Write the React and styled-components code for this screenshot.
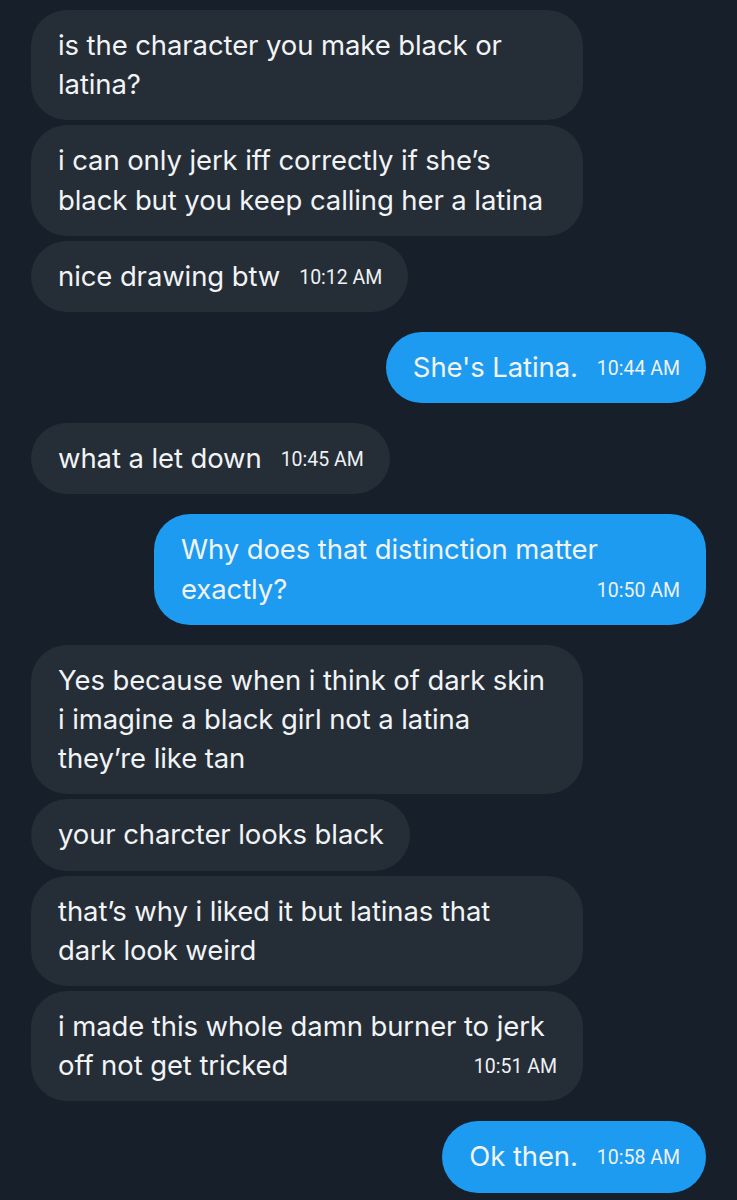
import React from "react";
import styled, { createGlobalStyle } from "styled-components";

const GlobalStyle = createGlobalStyle`
  html, body {
    margin: 0;
    padding: 0;
    background: #17202a;
  }
`;

// line breaks follow the screenshot
const groups = [
  {
    mine: false,
    messages: [
      { text: "is the character you make black or\nlatina?" },
      { text: "i can only jerk iff correctly if she’s\nblack but you keep calling her a latina" },
      { text: "nice drawing btw", time: "10:12 AM" },
    ],
  },
  { mine: true, messages: [{ text: "She's Latina.", time: "10:44 AM" }] },
  { mine: false, messages: [{ text: "what a let down", time: "10:45 AM" }] },
  {
    mine: true,
    messages: [{ text: "Why does that distinction matter\nexactly?", time: "10:50 AM" }],
  },
  {
    mine: false,
    messages: [
      { text: "Yes because when i think of dark skin\ni imagine a black girl not a latina\nthey’re like tan" },
      { text: "your charcter looks black" },
      { text: "that’s why i liked it but latinas that\ndark look weird" },
      { text: "i made this whole damn burner to jerk\noff not get tricked", time: "10:51 AM" },
    ],
  },
  { mine: true, messages: [{ text: "Ok then.", time: "10:58 AM" }] },
];

export default function App() {
  return (
    <Page>
      <GlobalStyle />
      {groups.map((group, gi) => (
        <Group key={gi} $mine={group.mine}>
          {group.messages.map((msg, mi) => (
            <Bubble key={mi} $mine={group.mine} $full={msg.text.includes("\n")}>
              {msg.text}
              {msg.time && <Time>{msg.time}</Time>}
            </Bubble>
          ))}
        </Group>
      ))}
    </Page>
  );
}

const Page = styled.div`
  min-height: 1200px;
  box-sizing: border-box;
  background: #17202a;
  padding: 10px 31px 8px 31px;
  display: flex;
  flex-direction: column;
  gap: 20px;
`;

const Group = styled.div`
  display: flex;
  flex-direction: column;
  align-items: ${(p) => (p.$mine ? "flex-end" : "flex-start")};
  gap: 5px;
`;

const Bubble = styled.div`
  width: ${(p) => (p.$full ? "552px" : "auto")};
  max-width: 552px;
  box-sizing: border-box;
  padding: 16px 26px 16px 27px;
  border-radius: 36px;
  background: ${(p) => (p.$mine ? "#1d9bf0" : "#252d37")};
  color: #f1f3f5;
  font-family: Inter, "Noto Sans", sans-serif;
  font-size: 27.5px;
  line-height: 39.2px;
  letter-spacing: -0.1px;
  white-space: pre-line;
`;

const Time = styled.span`
  float: right;
  margin-left: 19px;
  padding-top: 3px;
  line-height: 36px;
  font-family: Roboto, "Liberation Sans", sans-serif;
  font-size: 19.5px;
  letter-spacing: 0;
  white-space: nowrap;
  color: #eef1f4;
`;
